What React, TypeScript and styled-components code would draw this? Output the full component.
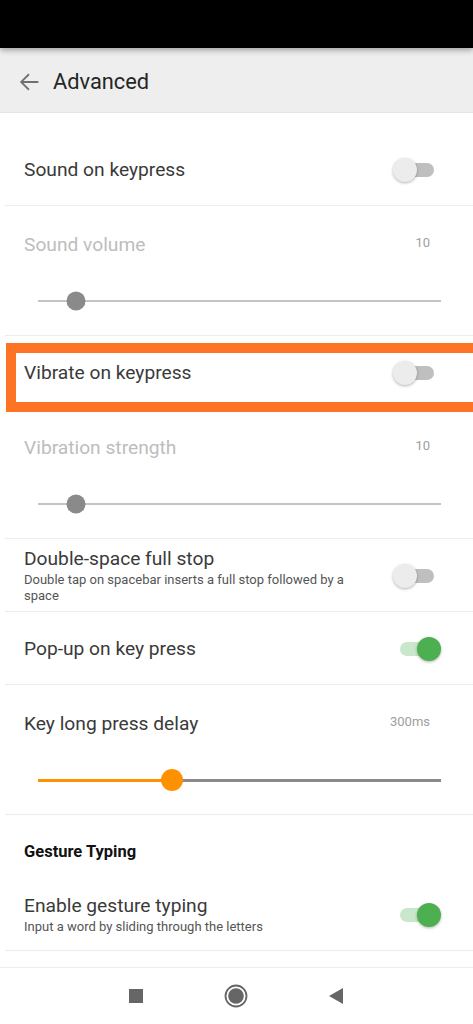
import * as React from "react";
import styled, { createGlobalStyle } from "styled-components";

const GlobalStyle = createGlobalStyle`
  html, body {
    margin: 0;
    padding: 0;
    background: #fff;
    font-family: Roboto, "Noto Sans", Arial, sans-serif;
  }
  * { box-sizing: border-box; }
`;

type ToggleItem = { kind: "toggle"; title: string; summary?: string; on: boolean; highlight?: boolean };
type SliderItem = { kind: "slider"; title: string; value: string; pos: number; enabled: boolean };
type HeaderItem = { kind: "header"; title: string };
type Item = ToggleItem | SliderItem | HeaderItem;

const ITEMS: Item[] = [
  { kind: "toggle", title: "Sound on keypress", on: false },
  { kind: "slider", title: "Sound volume", value: "10", pos: 0.095, enabled: false },
  { kind: "toggle", title: "Vibrate on keypress", on: false, highlight: true },
  { kind: "slider", title: "Vibration strength", value: "10", pos: 0.095, enabled: false },
  {
    kind: "toggle",
    title: "Double-space full stop",
    summary: "Double tap on spacebar inserts a full stop followed by a space",
    on: false,
  },
  { kind: "toggle", title: "Pop-up on key press", on: true },
  { kind: "slider", title: "Key long press delay", value: "300ms", pos: 0.333, enabled: true },
  { kind: "header", title: "Gesture Typing" },
  {
    kind: "toggle",
    title: "Enable gesture typing",
    summary: "Input a word by sliding through the letters",
    on: true,
  },
];

function Toggle({ on }: { on: boolean }) {
  return (
    <Switch>
      <Track on={on} />
      <Thumb on={on} />
    </Switch>
  );
}

function Slider({ pos, enabled }: { pos: number; enabled: boolean }) {
  return (
    <SliderBox>
      <Rail enabled={enabled}>
        <Fill enabled={enabled} style={{ width: `${pos * 100}%` }} />
      </Rail>
      <Knob enabled={enabled} style={{ left: `${pos * 100}%` }} />
    </SliderBox>
  );
}

function Row({ item }: { item: Item }) {
  if (item.kind === "header") {
    return <SectionTitle>{item.title}</SectionTitle>;
  }
  if (item.kind === "slider") {
    return (
      <SliderRow>
        <SliderHead>
          <Title disabled={!item.enabled}>{item.title}</Title>
          <Value>{item.value}</Value>
        </SliderHead>
        <Slider pos={item.pos} enabled={item.enabled} />
      </SliderRow>
    );
  }
  return (
    <ToggleRow highlight={item.highlight}>
      <Texts>
        <Title>{item.title}</Title>
        {item.summary && <Summary>{item.summary}</Summary>}
      </Texts>
      <Toggle on={item.on} />
    </ToggleRow>
  );
}

function App() {
  return (
    <Screen>
      <GlobalStyle />
      <StatusBar />
      <AppBar>
        <BackButton>
          <svg width="28" height="28" viewBox="0 0 24 24">
            <path
              fill="#707070"
              d="M20 11.2H7.2l5.3-5.3-1.1-1.1L4.2 12l7.2 7.2 1.1-1.1-5.3-5.3H20z"
            />
          </svg>
        </BackButton>
        <AppTitle>Advanced</AppTitle>
      </AppBar>
      <Content>
        {ITEMS.map((item, i) => (
          <Row key={i} item={item} />
        ))}
      </Content>
      <NavBar>
        <svg width="16" height="16" viewBox="0 0 16 16">
          <rect x="1" y="1" width="14" height="14" fill="#666" />
        </svg>
        <svg width="24" height="24" viewBox="0 0 24 24">
          <circle cx="12" cy="12" r="10.5" fill="none" stroke="#666" strokeWidth="1.8" />
          <circle cx="12" cy="12" r="7.8" fill="#666" />
        </svg>
        <svg width="16" height="18" viewBox="0 0 16 18">
          <path d="M15 1v16L1 9z" fill="#666" />
        </svg>
      </NavBar>
    </Screen>
  );
}

const Screen = styled.div`
  width: 473px;
  height: 1024px;
  display: flex;
  flex-direction: column;
  overflow: hidden;
  background: #fff;
`;

const StatusBar = styled.div`
  height: 48px;
  flex: none;
  background: #000;
  box-shadow: 0 2px 6px rgba(0, 0, 0, 0.35);
  position: relative;
  z-index: 2;
`;

const AppBar = styled.div`
  height: 65px;
  flex: none;
  display: flex;
  align-items: center;
  padding-top: 3px;
  background: #eeeeee;
  border-bottom: 1px solid #e4e4e4;
`;

const BackButton = styled.div`
  width: 53px;
  padding-left: 15px;
  display: flex;
  align-items: center;
`;

const AppTitle = styled.div`
  font-size: 21.8px;
  color: #262626;
`;

const Content = styled.div`
  flex: 1;
  overflow: hidden;
  padding-top: 20px;
`;

const Divided = styled.div`
  position: relative;
  &::after {
    content: "";
    position: absolute;
    left: 5px;
    right: 0;
    bottom: 0;
    height: 1px;
    background: #ececec;
  }
`;

const ToggleRow = styled(Divided)<{ highlight?: boolean }>`
  min-height: 73px;
  display: flex;
  align-items: center;
  padding: 0 32px 0 24px;
  ${(p) =>
    p.highlight &&
    `
    &::before {
      content: "";
      position: absolute;
      left: 6px;
      right: -10px;
      top: 7px;
      bottom: -3px;
      border: 10px solid #fd7524;
      z-index: 1;
    }
  `}
`;

const Texts = styled.div`
  flex: 1;
  padding-right: 40px;
  display: flex;
  flex-direction: column;
  gap: 1px;
`;

const Title = styled.div<{ disabled?: boolean }>`
  font-size: 19.2px;
  line-height: 24px;
  color: ${(p) => (p.disabled ? "#bdbdbd" : "#3a3a3a")};
`;

const Summary = styled.div`
  font-size: 13px;
  line-height: 16px;
  color: #555;
`;

const Switch = styled.div`
  width: 48px;
  height: 24px;
  position: relative;
  flex: none;
`;

const Track = styled.div<{ on: boolean }>`
  position: absolute;
  left: 7px;
  right: 7px;
  top: 5px;
  height: 14px;
  border-radius: 7px;
  background: ${(p) => (p.on ? "#c9e7ca" : "#bfbfbf")};
`;

const Thumb = styled.div<{ on: boolean }>`
  position: absolute;
  top: 0;
  left: ${(p) => (p.on ? "24px" : "0")};
  width: 24px;
  height: 24px;
  border-radius: 50%;
  background: ${(p) => (p.on ? "#4caf50" : "#ececec")};
  box-shadow: 0 1px 3px rgba(0, 0, 0, 0.3);
`;

const SliderRow = styled(Divided)`
  height: 130px;
  padding: 27px 0 0;
`;

const SliderHead = styled.div`
  display: flex;
  justify-content: space-between;
  align-items: flex-start;
  padding: 0 43px 0 24px;
`;

const Value = styled.div`
  font-size: 13px;
  line-height: 20px;
  color: #9e9e9e;
`;

const SliderBox = styled.div`
  position: relative;
  margin: 32px 32px 0 38px;
  height: 24px;
  display: flex;
  align-items: center;
`;

const Rail = styled.div<{ enabled: boolean }>`
  flex: 1;
  height: ${(p) => (p.enabled ? "3px" : "2.5px")};
  background: ${(p) => (p.enabled ? "#8a8a8a" : "#c4c4c4")};
  position: relative;
`;

const Fill = styled.div<{ enabled: boolean }>`
  height: 100%;
  background: ${(p) => (p.enabled ? "#ff9100" : "#c4c4c4")};
`;

const Knob = styled.div<{ enabled: boolean }>`
  position: absolute;
  top: 50%;
  width: ${(p) => (p.enabled ? "22px" : "19px")};
  height: ${(p) => (p.enabled ? "22px" : "19px")};
  border-radius: 50%;
  transform: translate(-50%, -50%);
  background: ${(p) => (p.enabled ? "#ff9100" : "#8a8a8a")};
`;

const SectionTitle = styled.div`
  height: 63px;
  padding: 27px 24px 0;
  font-size: 16.5px;
  font-weight: bold;
  color: #111;
`;

const NavBar = styled.div`
  height: 57px;
  flex: none;
  border-top: 1px solid #ececec;
  background: #fff;
  display: flex;
  align-items: center;
  justify-content: center;
  gap: 80px;
  padding-right: 2px;
`;

export default App;
